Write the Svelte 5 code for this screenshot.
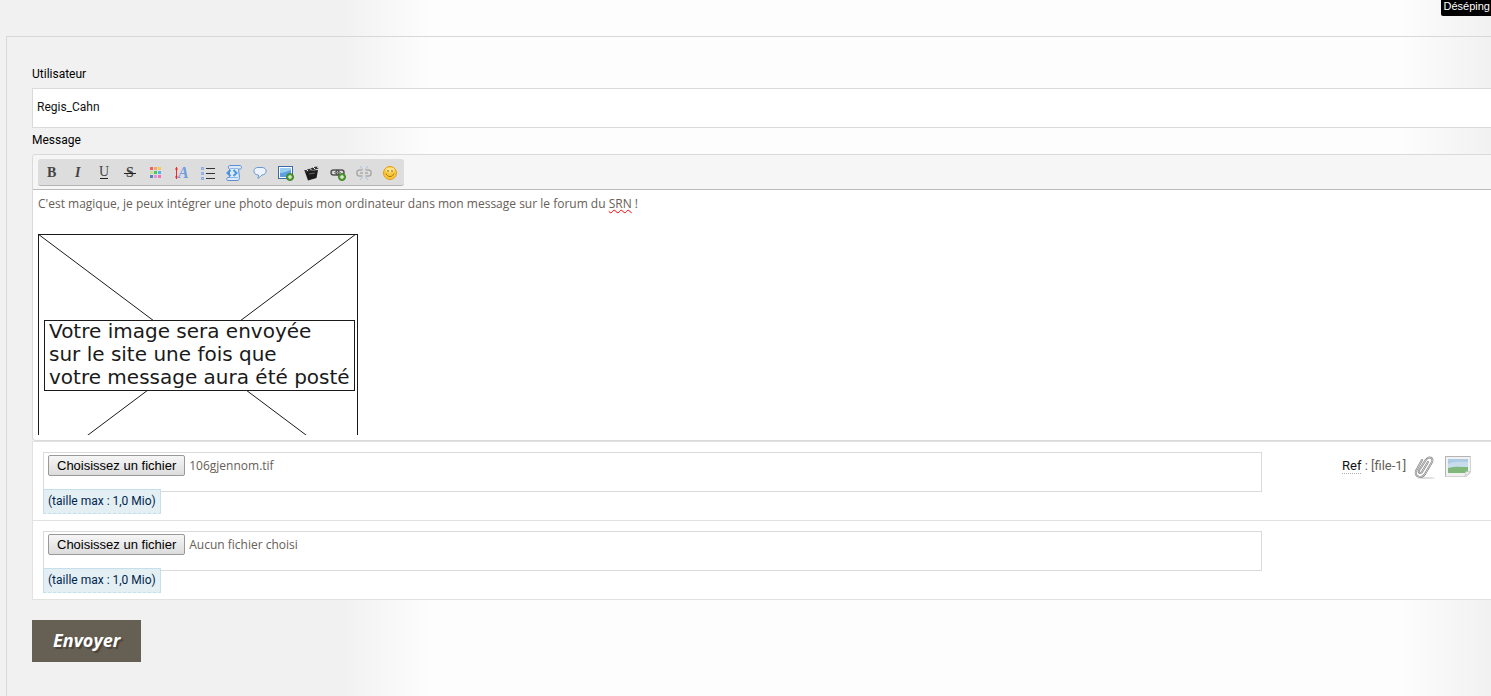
<script lang="ts">
  type FileRow = { id: string; name: string; ref?: string }

  let user = $state('Regis_Cahn')

  let files = $state<FileRow[]>([
    { id: 'file-1', name: '106gjennom.tif', ref: '[file-1]' },
    { id: 'file-2', name: 'Aucun fichier choisi' }
  ])

  const tools = [
    { id: 'bold', title: 'Gras' },
    { id: 'italic', title: 'Italique' },
    { id: 'underline', title: 'Souligné' },
    { id: 'strike', title: 'Barré' },
    { id: 'color', title: 'Couleur' },
    { id: 'size', title: 'Taille' },
    { id: 'list', title: 'Liste' },
    { id: 'code', title: 'Code' },
    { id: 'quote', title: 'Citation' },
    { id: 'image', title: 'Image' },
    { id: 'video', title: 'Vidéo' },
    { id: 'link', title: 'Lien' },
    { id: 'unlink', title: 'Supprimer le lien' },
    { id: 'smiley', title: 'Émoticône' }
  ]

  const swatches = ['#f0605f', '#f9a56a', '#f7c85c', '#c9e29b', '#3ecb5a', '#58aef2', '#5a7fb8', '#d79ade', '#fb6fb0']

  function pickFile(e: Event, row: FileRow) {
    const picked = (e.currentTarget as HTMLInputElement).files?.[0]
    if (picked) row.name = picked.name
  }
</script>

<div class="page">
  <header class="topbar">
    <button class="unpin" type="button">Déséping</button>
  </header>

  <form class="panel" onsubmit={(e) => e.preventDefault()}>
    <label class="label" for="user">Utilisateur</label>
    <input class="field" id="user" type="text" bind:value={user} />

    <span class="label message" id="message-label">Message</span>
    <div class="editor">
      <div class="toolbar">
        <div class="tools" role="toolbar" aria-label="Mise en forme">
          {#each tools as tool}
            <button class="tool" type="button" title={tool.title} aria-label={tool.title}>
              <svg viewBox="0 0 16 16" width="16" height="16" aria-hidden="true">
                {#if tool.id === 'bold'}
                  <text x="3" y="12" class="glyph heavy">B</text>
                {:else if tool.id === 'italic'}
                  <text x="5" y="12" class="glyph heavy slant">I</text>
                {:else if tool.id === 'underline'}
                  <text x="3" y="11" class="glyph">U</text>
                  <path d="M4 13.500h8" stroke="#222" />
                {:else if tool.id === 'strike'}
                  <text x="4" y="12" class="glyph heavy">S</text>
                  <path d="M2 8.500h12" stroke="#222" />
                {:else if tool.id === 'color'}
                  {#each swatches as fill, i}
                    <rect x={2 + (i % 3) * 4} y={2 + Math.floor(i / 3) * 4} width="3" height="3" {fill} />
                  {/each}
                {:else if tool.id === 'size'}
                  <path d="M2.500 2v12M1 4h3M1 12h3" fill="none" stroke="#f02828" />
                  <text x="4" y="13" class="glyph heavy slant blue">A</text>
                {:else if tool.id === 'list'}
                  <path d="M6 3.500h9M6 8.500h9M6 13.500h9" stroke="#333" />
                  <g fill="#a9c6ee" stroke="#8fb0e0">
                    <rect x="1.500" y="2.500" width="2" height="2" />
                    <rect x="1.500" y="7.500" width="2" height="2" />
                    <rect x="1.500" y="12.500" width="2" height="2" />
                  </g>
                {:else if tool.id === 'code'}
                  <path d="M3.500 .500h10.500c2 0 2 3.500 0 3.500h-1.500l1 8.500c0 2-1 3-2.500 3H2c-2 0-1.500-3 0-3h1.500V4c-1.500 0-1.500-3.500 0-3.500z" fill="#dceafa" stroke="#5b8fd0" />
                  <path d="M4 12.500h8M4 3.500h8" stroke="#8fb6e4" />
                  <path d="M4.500 5L1.500 8l3 3M7.500 5l3 3-3 3" fill="none" stroke="#4a94e2" stroke-width="2" />
                {:else if tool.id === 'quote'}
                  <path d="M6 2.500h4c5.500 0 5.500 7 0 7.500L6 13.500l.5-3.500C.500 10 .500 2.500 6 2.500z" fill="#edf4fd" stroke="#6a97d0" />
                {:else if tool.id === 'image'}
                  <rect x="0.500" y="1.500" width="14" height="12" fill="#fff" stroke="#386aa8" />
                  <rect x="2" y="3" width="11" height="9" fill="#5f9fdd" />
                  <path d="M2 8c4 0 7-2 11-3V3H2z" fill="#9accf2" />
                  <circle cx="12" cy="12" r="3.500" fill="#58a239" stroke="#3b7d25" />
                  <path d="M12 10v4M10 12h4" stroke="#fff" />
                {:else if tool.id === 'video'}
                  <path d="M1 7l2-1 11-1-1.500 8L4 15.500z" fill="#1c1c1c" />
                  <path d="M0 5.500L13.500 1l1 2.500L1.500 7.500z" fill="#333" />
                  <path d="M2 4l2 2M5.500 3l2 2M9 2l2 2M12.500 .500l1.500 2.500" stroke="#eee" />
                  <path d="M5 9l6-1" stroke="#666" />
                {:else if tool.id === 'link'}
                  <g fill="none" stroke="#555" stroke-width="1.500">
                    <rect x="1" y="5" width="8" height="5" rx="2.500" />
                    <rect x="6" y="5" width="8" height="5" rx="2.500" />
                  </g>
                  <path d="M4 7.500h7" stroke="#888" />
                  <circle cx="12" cy="12" r="3.500" fill="#58a239" stroke="#3b7d25" />
                  <path d="M12 10v4M10 12h4" stroke="#fff" />
                {:else if tool.id === 'unlink'}
                  <path d="M6.500 5h-3C0 5 0 11 3.500 11h3M9.500 5h3c3.500 0 3.500 6 0 6h-3M4 8h3M9 8h3" fill="none" stroke="#aaa" stroke-width="1.500" />
                  <path d="M4 1l2.500 3M12 1L9.500 4M4 15l2.500-3M12 15l-2.500-3" stroke="#a9bfdc" />
                {:else}
                  <circle cx="8" cy="8" r="6.500" fill="#fbc83a" stroke="#e09c14" />
                  <ellipse cx="8" cy="5" rx="4.500" ry="2.500" fill="#fde48a" />
                  <path d="M4 8.500c1 4 7 4 8 0" fill="none" stroke="#a4701a" />
                  <path d="M6 5v2M10 5v2" stroke="#8a5a10" />
                {/if}
              </svg>
            </button>
          {/each}
        </div>
      </div>

      <div class="body" contenteditable="true" role="textbox" tabindex="0" aria-multiline="true" aria-labelledby="message-label" spellcheck="false">
        <p>C'est magique, je peux intégrer une photo depuis mon ordinateur dans mon message sur le forum du <span class="typo">SRN</span> !</p>
        <svg class="placeholder" viewBox="0 0 320 240" width="320" height="240">
          <g fill="none" stroke="#1a1a1a">
            <rect x="0.500" y="0.500" width="319" height="239" />
            <path d="M0 0l320 240M318 0L-2 240" />
            <rect x="6.500" y="86.500" width="310" height="70" fill="#fff" />
          </g>
          <text x="11" y="104">Votre image sera envoyée</text>
          <text x="11" y="127">sur le site une fois que</text>
          <text x="11" y="150">votre message aura été posté</text>
        </svg>
      </div>
    </div>

    <div class="files">
      {#each files as row}
        <div class="file-row">
          <div class="picker">
            <div class="file-box">
              <input class="file-input" id={row.id} type="file" onchange={(e) => pickFile(e, row)} />
              <label class="choose" for={row.id}>Choisissez un fichier</label>
              <span class="file-name">{row.name}</span>
            </div>
            <span class="limit">(taille max : 1,0 Mio)</span>
          </div>
          <div class="ref">
            {#if row.ref}
              <span><abbr title="Référence">Ref</abbr> : {row.ref}</span>
              <button class="insert" type="button" aria-label="Insérer le fichier">
                <svg viewBox="0 0 22 26" width="22" height="26" aria-hidden="true">
                  <ellipse cx="12" cy="24" rx="9" ry="1" fill="#ddd" />
                  <g fill="none" stroke-linecap="round">
                    <path d="M14 8L8 18c-1.500 2-4 .5-3-1.500l7-11c3-4 8-1.500 6 2.500l-7 12c-3 5-11 3-9-3L8 6" stroke="#858585" stroke-width="2" />
                    <path d="M14 8L8 18c-1.500 2-4 .5-3-1.500l7-11c3-4 8-1.500 6 2.500l-7 12c-3 5-11 3-9-3L8 6" stroke="#ddd" stroke-width="0.800" />
                  </g>
                </svg>
              </button>
              <button class="insert" type="button" aria-label="Insérer l'image">
                <svg viewBox="0 0 28 26" width="28" height="26" aria-hidden="true">
                  <path d="M1.500 2.500h25v16l-4 4h-21z" fill="#f1f1f1" stroke="#d4d4d4" />
                  <path d="M1.500 2.500v20M1.500 2.500h25" stroke="#b4b4b4" />
                  <path d="M4 5h20v14H4z" fill="#aecbe6" />
                  <path d="M4 10c7-3 12-2 20-2v7H4z" fill="#c8ddec" />
                  <path d="M4 14c7-2 13-1 20-1v6H4z" fill="#80b87c" />
                  <path d="M26.500 17.500l-6 5c1.500-2 1.500-3 1-4.500z" fill="#fff" stroke="#ccc" />
                </svg>
              </button>
            {/if}
          </div>
        </div>
      {/each}
    </div>

    <button class="send" type="submit">Envoyer</button>
  </form>
</div>

<style>
  :global(body) {
    background: #f1f1f1;
  }

  .page {
    min-height: 100vh;
    display: flex;
    flex-direction: column;
    overflow: hidden;
    font-family: Roboto, 'Liberation Sans', sans-serif;
    font-size: 12px;
    color: #666057;
    background: linear-gradient(to right, #f1f1f1 340px, #fdfdfd 430px, #fdfdfd calc(100% - 90px), #f1f1f1);
  }

  button,
  input {
    font: inherit;
    color: inherit;
    margin: 0;
    box-sizing: border-box;
  }

  .topbar {
    height: 36px;
    display: flex;
    align-items: flex-start;
    justify-content: flex-end;
  }

  .unpin {
    height: 16px;
    padding: 0 1px 3px 3px;
    border: 0;
    border-bottom-left-radius: 2px;
    background: #000;
    color: #fff;
    font: 11px/13px 'Liberation Sans', Arial, sans-serif;
  }

  .panel {
    flex: 1;
    display: flex;
    flex-direction: column;
    margin-left: 6px;
    padding: 28px 0 34px 25px;
    border: solid #d8d8d8;
    border-width: 1px 0 0 1px;
  }

  .label {
    color: #000;
    line-height: 18px;
    margin-bottom: 5px;
  }

  .label.message {
    margin-top: 3px;
  }

  .field {
    width: 100%;
    height: 40px;
    padding: 0 4px 2px;
    border: 1px solid #dadada;
    border-right: 0;
    background: #fff;
    color: #111;
  }

  .editor {
    border: 1px solid #dadada;
    border-right: 0;
    border-radius: 4px 0 0 4px;
    background: #fff;
    overflow: hidden;
  }

  .toolbar {
    display: flex;
    padding: 4px 5px 3px;
    background: #f6f6f6;
    border-bottom: 1px solid #bbb;
  }

  .tools {
    display: flex;
    padding: 0 1px;
    border-radius: 3px;
    background: #ddd;
    border-bottom: 1px solid #b4b4b4;
  }

  .tool {
    width: 26px;
    height: 26px;
    padding: 6px 5px 4px;
    border: 0;
    background: none;
  }

  .tool svg,
  .insert svg {
    display: block;
  }

  .glyph {
    font: 14px 'Liberation Serif', serif;
    fill: #444;
  }

  .glyph.heavy {
    font-weight: bold;
  }

  .glyph.slant {
    font-style: italic;
  }

  .glyph.blue {
    font-size: 16px;
    fill: #6f9be0;
  }

  .body {
    height: 240px;
    margin: 5px;
    overflow: hidden;
    outline: 0;
  }

  .body p {
    margin: 0 0 21px;
    font: 12px/18px 'Open Sans', sans-serif;
  }

  .typo {
    text-decoration: underline wavy #f00 1px;
  }

  .placeholder {
    display: block;
  }

  .placeholder text {
    font: 20px 'DejaVu Sans', sans-serif;
    fill: #1a1a1a;
  }

  .files {
    border: solid #e2e2e2;
    border-width: 1px 0 0 1px;
    background: #fff;
  }

  .file-row {
    display: flex;
    padding: 10px 0 6px 10px;
    border-bottom: 1px solid #e2e2e2;
  }

  .picker {
    flex: 1;
    display: flex;
    flex-direction: column;
    align-items: flex-start;
  }

  .file-box {
    position: relative;
    align-self: stretch;
    display: flex;
    align-items: flex-start;
    gap: 4px;
    height: 40px;
    padding: 2px 4px;
    border: 1px solid #dadada;
    box-sizing: border-box;
    line-height: 21px;
  }

  .file-input {
    position: absolute;
    width: 1px;
    height: 1px;
    opacity: 0;
  }

  .choose {
    padding: 0 8px;
    border: 1px solid #999;
    border-radius: 2px;
    background: linear-gradient(#f6f6f6, #dcdcdc);
    color: #000;
    font: 13px/19px 'Liberation Sans', Arial, sans-serif;
  }

  .file-name {
    font: 12px/22px 'Open Sans', sans-serif;
  }

  .limit {
    position: relative;
    margin-top: -3px;
    padding: 0 4px;
    border: 1px solid #c5dfec;
    border-bottom-style: dashed;
    background: #e4eff4;
    color: #00264d;
    line-height: 23px;
  }

  .ref {
    width: 229px;
    display: flex;
    align-items: flex-start;
    gap: 8px;
    padding-left: 80px;
    box-sizing: border-box;
    font-size: 13px;
    line-height: 28px;
  }

  .ref abbr {
    color: #111;
    text-decoration: none;
    border-bottom: 1px dotted #aaa;
  }

  .insert {
    padding: 2px 0 0;
    border: 0;
    background: none;
  }

  .send {
    align-self: flex-start;
    height: 42px;
    margin-top: 20px;
    padding: 0 21px 2px;
    border: 0;
    background: #665f54;
    color: #fff;
    font: italic bold 18px 'Open Sans', sans-serif;
    text-shadow: 2px 2px 1px #49443b;
  }
</style>
